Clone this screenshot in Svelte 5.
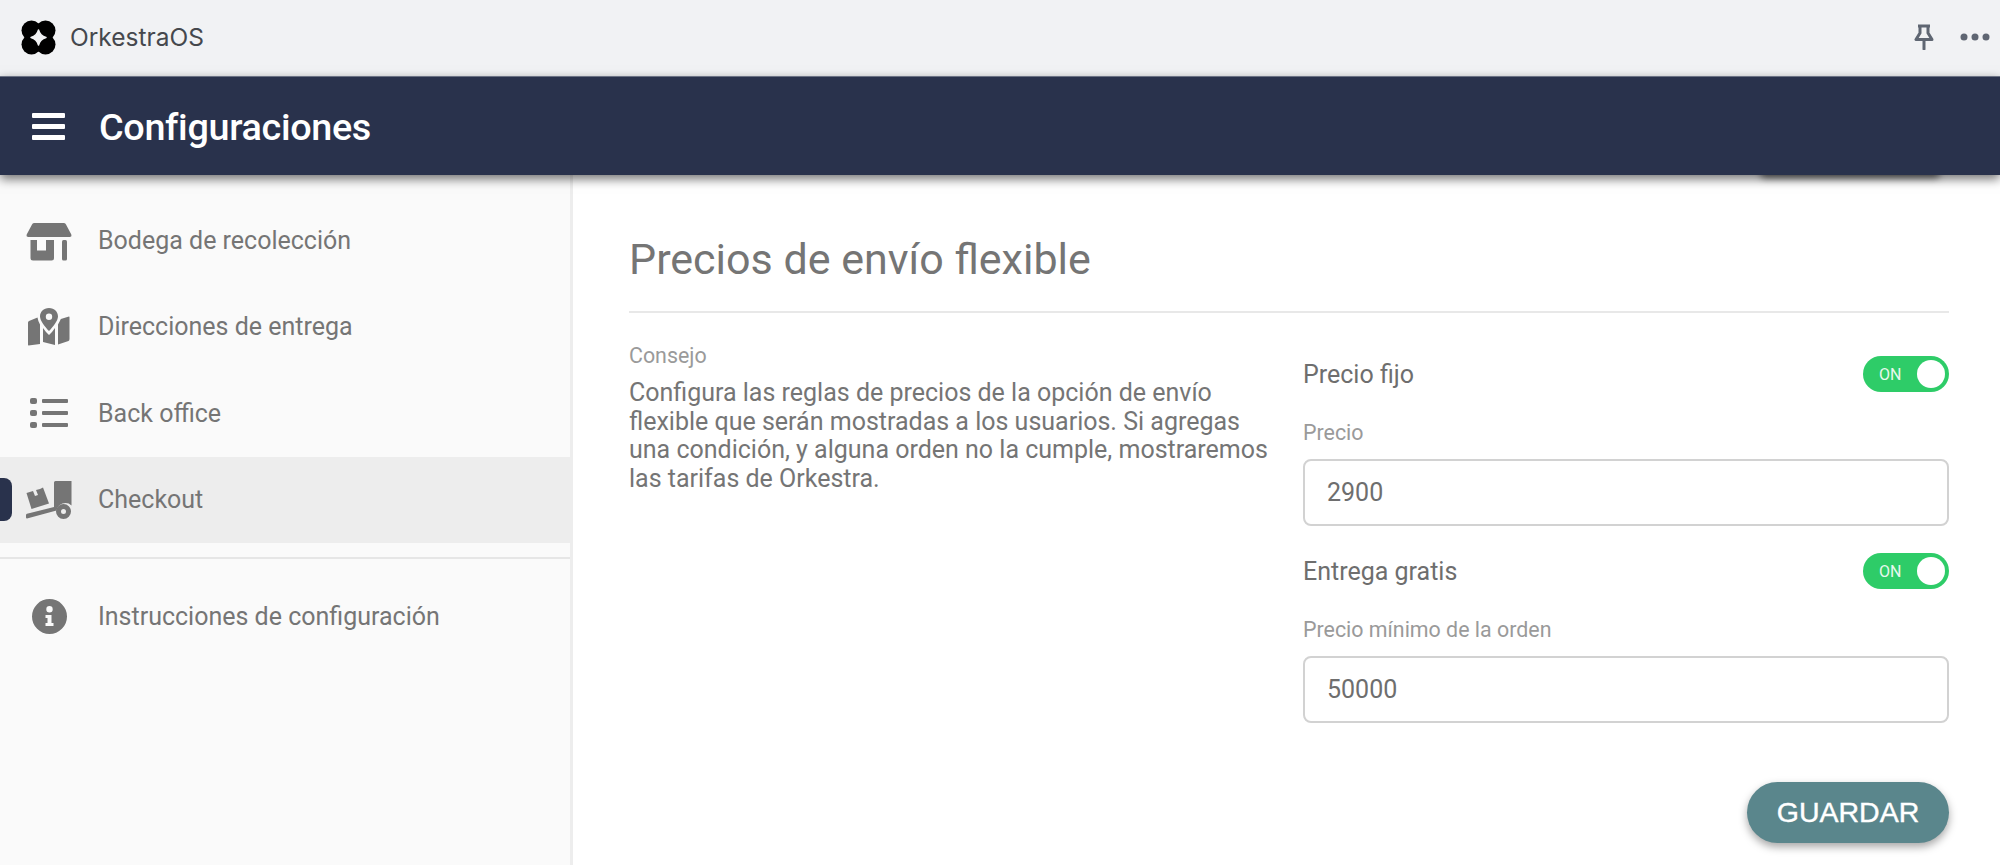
<script>
  const items = [
    { label: 'Bodega de recolección', icon: 'store' },
    { label: 'Direcciones de entrega', icon: 'map' },
    { label: 'Back office', icon: 'list' },
    { label: 'Checkout', icon: 'dolly', active: true }
  ];
</script>

{#snippet icon(name)}
  {#if name === 'store'}
    <svg class="store" width="46" height="38" viewBox="0 0 46 38" fill="#757575">
      <path d="M6 1.500Q6.500 0 8 0H38Q39.500 0 40 1.500L45.300 11.500Q46 14 43.500 14H2.500Q0 14 .7 11.500Z"/>
      <path d="M4.500 17H11V27.500H20V17H28V35Q28 37.500 25.500 37.500H7Q4.500 37.500 4.500 35Z"/>
      <rect x="36" y="17" width="5" height="20.500" rx="1.500"/>
    </svg>
  {:else if name === 'map'}
    <svg width="42" height="38" viewBox="0 0 42 38" fill="#757575">
      <path fill-rule="evenodd" d="M21 0C26.500 0 30 4 30 8.500C30 12.500 25 19 21 23C17 19 12 12.500 12 8.500C12 4 15.500 0 21 0ZM21 5.500A3.200 3.200 0 1 0 21 11.900A3.200 3.200 0 1 0 21 5.500Z"/>
      <path d="M0 14.500Q0 13.500 1 13L9.500 9.500Q10 13 12 16.500V36L.5 37.500Q0 37.500 0 36.500Z"/>
      <path d="M15 20Q18 24.500 21 27Q24 24.500 27 20V37L15 34Z"/>
      <path d="M30 16.500Q32 13 32.800 11L41 8.500Q41.500 8.500 41.500 9.500V31Q41.500 32.500 40.500 33L30 36.500Z"/>
    </svg>
  {:else if name === 'list'}
    <svg width="38" height="30" viewBox="0 0 38 30" fill="#757575">
      <rect x="0" y="0" width="7" height="6" rx="2"/>
      <rect x="0" y="12" width="7" height="6" rx="2"/>
      <rect x="0" y="24" width="7" height="6" rx="2"/>
      <rect x="12" y="1" width="26" height="4" rx="1"/>
      <rect x="12" y="13" width="26" height="4" rx="1"/>
      <rect x="12" y="25" width="26" height="4" rx="1"/>
    </svg>
  {:else if name === 'dolly'}
    <svg width="46" height="38" viewBox="0 0 46 38" fill="#757575">
      <path d="M28 1.500Q28 0 29.500 0H45.500V24.500A9 9 0 0 0 30.500 29.500L1 37.500Q0 37.500 0 36.500V34Q0 33 1 32.800L28 26Z"/>
      <path fill-rule="evenodd" d="M37.500 23A7.500 7.500 0 1 1 37.500 38A7.500 7.500 0 1 1 37.500 23ZM37.500 28A2.500 2.500 0 1 0 37.500 33A2.500 2.500 0 1 0 37.500 28Z"/>
      <path d="M0.500 12L7 10 9 15 12 14 10 9 14 8 17 6.500 23 22.500 5.500 28Z"/>
    </svg>
  {:else}
    <svg width="35" height="35" viewBox="0 0 35 35" fill="#757575">
      <path fill-rule="evenodd" d="M17.500 0A17.500 17.500 0 1 1 17.500 35A17.500 17.500 0 1 1 17.500 0ZM17.500 7A3.200 3.200 0 1 0 17.500 13.400A3.200 3.200 0 1 0 17.500 7ZM13.500 16V19H15.500V24H13.500V27H21.500V24H19.500V16Z"/>
    </svg>
  {/if}
{/snippet}

<div class="page">
  <div class="titlebar">
    <div class="brand">
      <svg class="logo" width="35" height="35" viewBox="0 0 35 35">
        <g fill="#000">
          <circle cx="10.500" cy="10.500" r="10"/>
          <circle cx="24.500" cy="10.500" r="10"/>
          <circle cx="10.500" cy="24.500" r="10"/>
          <circle cx="24.500" cy="24.500" r="10"/>
        </g>
        <path d="M17.500 10C18.500 14 21 16.500 25 17.500C21 18.500 18.500 21 17.500 25C16.500 21 14 18.500 10 17.500C14 16.500 16.500 14 17.500 10Z" fill="#f1f2f4" stroke="#f1f2f4" stroke-width="1.500" stroke-linejoin="round"/>
      </svg>
      <span class="appname">OrkestraOS</span>
    </div>
    <div class="actions">
      <svg width="20" height="26" viewBox="0 0 20 26" fill="none" stroke="#5f6672" stroke-width="3" stroke-linejoin="round">
        <path d="M4 2H16M6 2V9L2 15.500H18L14 9V2"/>
        <path d="M10 16V25" stroke-linecap="round"/>
      </svg>
      <svg width="30" height="8" viewBox="0 0 30 8" fill="#5f6672">
        <circle cx="4" cy="4" r="3.500"/><circle cx="15" cy="4" r="3.500"/><circle cx="26" cy="4" r="3.500"/>
      </svg>
    </div>
  </div>

  <header class="appbar">
    <div class="burger"><span></span><span></span><span></span></div>
    <h1>Configuraciones</h1>
  </header>

  <div class="body">
    <aside class="sidebar">
      <nav class="menu">
        {#each items as item}
          <div class="item" class:active={item.active}>
            {#if item.active}<span class="marker"></span>{/if}
            <span class="ico">{@render icon(item.icon)}</span>
            <span>{item.label}</span>
          </div>
        {/each}
      </nav>
      <hr class="sep" />
      <div class="item help">
        <span class="ico">{@render icon('info')}</span>
        <span>Instrucciones de configuración</span>
      </div>
    </aside>

    <main class="content">
      <div class="peek"></div>
      <h2>Precios de envío flexible</h2>
      <div class="columns">
        <section class="tip">
          <div class="small">Consejo</div>
          <p>Configura las reglas de precios de la opción de envío flexible que serán mostradas a los usuarios. Si agregas una condición, y alguna orden no la cumple, mostraremos las tarifas de Orkestra.</p>
        </section>
        <section class="form">
          <div class="row">
            <span>Precio fijo</span>
            <div class="toggle"><span>ON</span><i></i></div>
          </div>
          <label class="small" for="p1">Precio</label>
          <input id="p1" value="2900" />
          <div class="row second">
            <span>Entrega gratis</span>
            <div class="toggle"><span>ON</span><i></i></div>
          </div>
          <label class="small" for="p2">Precio mínimo de la orden</label>
          <input id="p2" value="50000" />
          <div class="foot"><button>GUARDAR</button></div>
        </section>
      </div>
    </main>
  </div>
</div>

<style>
  :global(body) { margin: 0; overflow: hidden; background: #fff; }
  .page { width: 2000px; height: 865px; display: flex; flex-direction: column; overflow: hidden; font-family: Roboto, sans-serif; color: #757575; }
  .titlebar { height: 76px; flex: none; background: #f1f2f4; display: flex; align-items: center; justify-content: space-between; padding: 0 10px 2px 21px; box-sizing: border-box; }
  .brand { display: flex; align-items: center; gap: 14px; }
  .appname { font-family: Inter, sans-serif; font-size: 24.500px; color: #45484d; }
  .actions { display: flex; align-items: center; gap: 26px; margin-top: -1px; }
  .appbar { height: 99px; flex: none; background: #29324c; display: flex; align-items: center; position: relative; z-index: 2; box-shadow: 0 4px 10px rgba(0,0,0,.55); padding-left: 32px; border-top: 1px solid #6b7284; box-sizing: border-box; }
  .burger { width: 33px; display: flex; flex-direction: column; gap: 6px; margin-right: 34px; }
  .burger span { height: 5px; background: #fff; border-radius: 1px; }
  h1 { margin: 0; padding-top: 2px; font-size: 37.800px; font-weight: 500; color: #fff; letter-spacing: -.35px; }
  .body { flex: 1; display: flex; min-height: 0; }
  .sidebar { width: 570px; flex: none; background: #fafafa; padding-top: 22px; box-sizing: content-box; border-right: 3px solid #ededed; }
  .item { height: 86.500px; display: flex; align-items: center; font-size: 25px; position: relative; }
  .item.active { background: #ededed; }
  .item.help { margin-top: 14px; }
  .ico { width: 98px; flex: none; display: flex; justify-content: center; align-items: center; }
  .store { margin-top: 3px; }
  .marker { position: absolute; left: 0; top: 21px; width: 12px; height: 43px; background: #29324c; border-radius: 0 8px 8px 0; }
  .sep { margin: 14px 0 0; border: 0; border-top: 2px solid #e6e6e6; }
  .content { flex: 1; padding: 0 51px 0 56px; min-width: 0; position: relative; }
  .peek { position: absolute; right: 60px; top: -10px; width: 180px; height: 10px; border-radius: 30px; box-shadow: 0 3px 7px rgba(0,0,0,.55); }
  h2 { margin: 0; height: 138px; box-sizing: border-box; padding-top: 59px; font-size: 43px; line-height: 50px; font-weight: 400; color: #757575; border-bottom: 2px solid #e8e8e8; }
  .columns { display: flex; }
  .tip { width: 650px; margin-right: 24px; flex: none; padding-top: 31px; }
  .small { display: block; font-size: 21.400px; color: #9a9a9a; line-height: 24px; }
  .tip p { margin: 11px 0 0; font-size: 25px; line-height: 28.700px; color: #757575; }
  .form { flex: 1; min-width: 0; }
  .row { display: flex; align-items: center; justify-content: space-between; height: 36px; margin-top: 43px; font-size: 25px; color: #6e6e6e; }
  .row.second { margin-top: 27px; }
  .form label { margin-top: 29px; height: 37px; }
  .toggle { width: 86px; height: 36px; border-radius: 18px; background: #2ecc68; position: relative; display: flex; align-items: center; padding-left: 16px; box-sizing: border-box; color: #e8f8ee; font-size: 16px; }
  .toggle i { position: absolute; right: 4px; top: 4px; width: 28px; height: 28px; border-radius: 50%; background: #fff; }
  input { display: block; width: 100%; height: 67px; box-sizing: border-box; margin-top: 1px; padding: 0 22px; border: 2px solid #d2d2d2; border-radius: 8px; background: #fff; font-family: Roboto, sans-serif; font-size: 25px; color: #6e6e6e; outline: none; }
  .foot { display: flex; justify-content: flex-end; margin-top: 59px; }
  button { width: 202px; height: 61px; border: 0; border-radius: 31px; background: #5a868c; color: #fff; font-family: "Liberation Sans", Arial, sans-serif; font-size: 28.500px; -webkit-text-stroke: .4px #fff; box-shadow: 0 4px 8px rgba(0,0,0,.35); }
</style>
